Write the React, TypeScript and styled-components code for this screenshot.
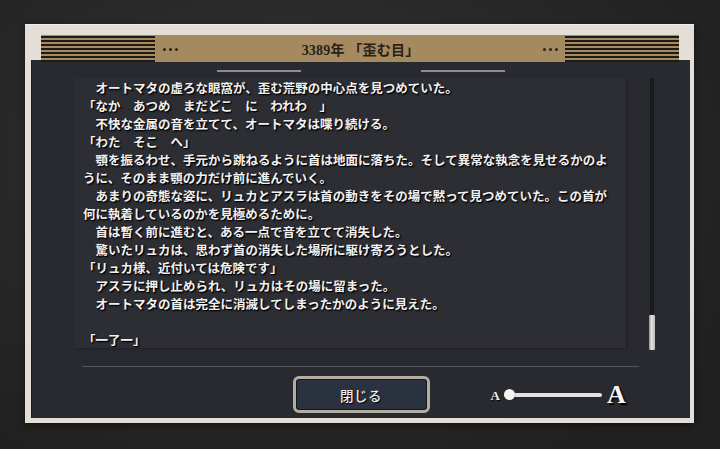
import React from "react";
import styled, { createGlobalStyle } from "styled-components";

const Global = createGlobalStyle`
  html, body { margin: 0; padding: 0; }
  body {
    width: 720px;
    height: 449px;
    overflow: hidden;
    background: #262626;
    font-family: "Noto Sans CJK JP", "Noto Sans", sans-serif;
  }
`;

const Screen = styled.div`
  width: 720px;
  height: 449px;
  box-sizing: border-box;
  padding: 24px 26px 26px 25px;
  background: radial-gradient(ellipse 70% 80% at 40% 35%, #323232 0%, #282828 55%, #202020 100%);
`;

const Frame = styled.div`
  width: 669px;
  height: 399px;
  box-sizing: border-box;
  padding: 11px 4px 5px 6px;
  background: #e4dfd6;
  border-top: 1px solid #f1eee9;
  display: flex;
  flex-direction: column;
  box-shadow: 0 2px 6px rgba(0, 0, 0, 0.45);
`;

const Header = styled.div`
  position: relative;
  z-index: 1;
  margin: -1px 11px 0 10px;
  height: 27px;
  background: #a58a60;
  display: flex;
  align-items: center;
`;

const Stripes = styled.div`
  width: 114px;
  height: 27px;
  background: repeating-linear-gradient(
    to bottom,
    #a58a60 0px,
    #a58a60 1px,
    #1e1a15 1px,
    #1e1a15 3px,
    #a58a60 3px,
    #a58a60 4px
  );
`;

const Dots = styled.div<{ $side: "left" | "right" }>`
  display: flex;
  gap: 3px;
  margin: ${(p) => (p.$side === "left" ? "1px 0 0 8px" : "1px 7px 0 0")};
`;

const Dot = styled.span`
  width: 3px;
  height: 3px;
  border-radius: 50%;
  background: #2a2219;
`;

const Title = styled.div`
  flex: 1;
  text-align: center;
  font-family: "Liberation Serif", "Noto Sans CJK JP", serif;
  font-weight: 700;
  font-size: 14px;
  color: #2a2116;
  letter-spacing: 0.2px;
  padding-top: 1px;
`;

const Panel = styled.div`
  flex: 1;
  margin-top: -2px;
  background: #292a30;
  border-left: 1px solid #1b1c20;
  display: flex;
  flex-direction: column;
`;

const TabMarks = styled.div`
  display: flex;
  justify-content: center;
  gap: 120px;
  padding-top: 10px;
  padding-right: 1px;
`;

const TabMark = styled.div`
  width: 84px;
  height: 2px;
  background: #8d8d92;
`;

const MainRow = styled.div`
  display: flex;
  align-items: flex-start;
  margin-top: 6px;
`;

const TextArea = styled.div`
  margin-left: 43px;
  width: 551px;
  height: 270px;
  box-sizing: border-box;
  padding: 1px 0 0 8px;
  background: #2d2e34;
  overflow: hidden;
  box-shadow: 1px 1px 2px rgba(0, 0, 0, 0.25);
`;

const Line = styled.div`
  height: 18px;
  line-height: 18px;
  white-space: nowrap;
  font-family: "Noto Sans CJK JP", sans-serif;
  font-weight: 700;
  font-size: 12.5px;
  color: #f1f1f1;
  text-shadow: 1px 1px 1px #000, 1px 1px 2px rgba(0, 0, 0, 0.8);

  &:last-child {
    height: 16px;
  }
`;

const ScrollTrack = styled.div`
  margin-left: 23px;
  width: 6px;
  height: 272px;
  background: linear-gradient(
    to right,
    transparent 0,
    transparent 1px,
    #1a1b1f 1px,
    #1a1b1f 5px,
    transparent 5px
  );
  display: flex;
  flex-direction: column;
  justify-content: flex-end;
`;

const ScrollThumb = styled.div`
  height: 35px;
  border-radius: 1px;
  background: linear-gradient(to right, #8f8f8f, #e2e2e2 40%, #bdbdbd);
`;

const Separator = styled.div`
  height: 1px;
  margin: 16px 51px 0 50px;
  background: #55565d;
`;

const BottomRow = styled.div`
  display: grid;
  grid-template-columns: 1fr auto 1fr;
  align-items: center;
  margin-top: 9px;
`;

const CloseButton = styled.button`
  grid-column: 2;
  width: 137px;
  height: 37px;
  box-sizing: border-box;
  border: 3px solid #b4aea1;
  border-radius: 6px;
  padding: 0;
  background: #2a3240;
  box-shadow: inset 0 0 0 1px #14171c;
  color: #ececec;
  font-family: "Noto Sans CJK JP", sans-serif;
  font-size: 13.5px;
  font-weight: 500;
  letter-spacing: 0.5px;
  text-shadow: 1px 1px 1px #000;
  cursor: pointer;
`;

const FontSizeControl = styled.div`
  grid-column: 3;
  display: flex;
  align-items: center;
  padding-left: 61px;
`;

const SmallA = styled.span`
  font-family: "Liberation Serif", serif;
  font-weight: 700;
  font-size: 13px;
  line-height: 1;
  color: #f0f0f0;
  text-shadow: 1px 1px 1px #000;
  margin-right: 4px;
  margin-top: 2px;
`;

const SliderTrack = styled.div`
  width: 98px;
  height: 4px;
  border-radius: 2px;
  background: #e2e2e2;
  display: flex;
  align-items: center;
`;

const Knob = styled.div`
  width: 11px;
  height: 11px;
  border-radius: 50%;
  background: #f4f4f4;
  box-shadow: 0 0 1px rgba(0, 0, 0, 0.6);
`;

const BigA = styled.span`
  font-family: "Liberation Serif", serif;
  font-weight: 700;
  font-size: 26px;
  line-height: 1;
  color: #f6f6f6;
  text-shadow: 2px 2px 1px #000;
  margin-left: 5px;
`;

const lines = [
  "　オートマタの虚ろな眼窩が、歪む荒野の中心点を見つめていた。",
  "「なか　あつめ　まだどこ　に　われわ　」",
  "　不快な金属の音を立てて、オートマタは喋り続ける。",
  "「わた　そこ　へ」",
  "　顎を振るわせ、手元から跳ねるように首は地面に落ちた。そして異常な執念を見せるかのよ",
  "うに、そのまま顎の力だけ前に進んでいく。",
  "　あまりの奇態な姿に、リュカとアスラは首の動きをその場で黙って見つめていた。この首が",
  "何に執着しているのかを見極めるために。",
  "　首は暫く前に進むと、ある一点で音を立てて消失した。",
  "　驚いたリュカは、思わず首の消失した場所に駆け寄ろうとした。",
  "「リュカ様、近付いては危険です」",
  "　アスラに押し止められ、リュカはその場に留まった。",
  "　オートマタの首は完全に消滅してしまったかのように見えた。",
  "",
  "「一了一」",
];

export default function App() {
  return (
    <>
      <Global />
      <Screen>
        <Frame>
          <Header>
            <Stripes />
            <Dots $side="left">
              <Dot />
              <Dot />
              <Dot />
            </Dots>
            <Title>3389年 「歪む目」</Title>
            <Dots $side="right">
              <Dot />
              <Dot />
              <Dot />
            </Dots>
            <Stripes />
          </Header>
          <Panel>
            <TabMarks>
              <TabMark />
              <TabMark />
            </TabMarks>
            <MainRow>
              <TextArea>
                {lines.map((l, i) => (
                  <Line key={i}>{l || "\u00a0"}</Line>
                ))}
              </TextArea>
              <ScrollTrack>
                <ScrollThumb />
              </ScrollTrack>
            </MainRow>
            <Separator />
            <BottomRow>
              <CloseButton>閉じる</CloseButton>
              <FontSizeControl>
                <SmallA>A</SmallA>
                <SliderTrack>
                  <Knob />
                </SliderTrack>
                <BigA>A</BigA>
              </FontSizeControl>
            </BottomRow>
          </Panel>
        </Frame>
      </Screen>
    </>
  );
}
